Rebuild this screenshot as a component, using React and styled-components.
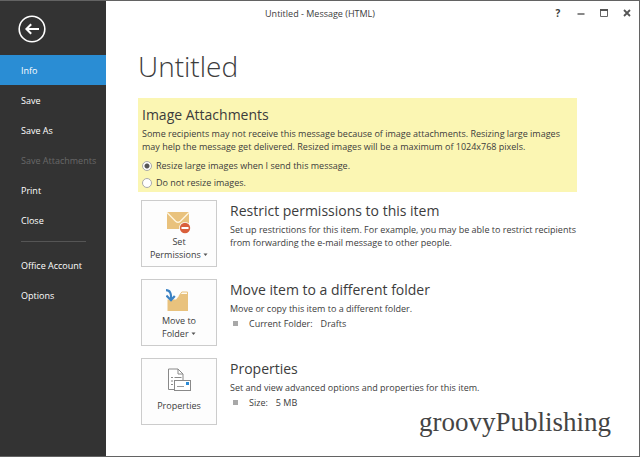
import React, { useState } from "react"
import styled, { createGlobalStyle } from "styled-components"

const GlobalStyle = createGlobalStyle`
  * {
    box-sizing: border-box;
  }

  body {
    margin: 0;
    background: #fff;
    color: #3c3c3c;
    font-family: "Open Sans", "Noto Sans", sans-serif;
    font-size: 9px;
    line-height: 13px;
  }

  button {
    font: inherit;
    color: inherit;
    padding: 0;
    border: 0;
    background: none;
    cursor: pointer;
  }

  h1, h2, p, ul, dl, dd, fieldset {
    margin: 0;
    padding: 0;
  }
`

const mainLinks = [
  { label: "Info", active: true },
  { label: "Save" },
  { label: "Save As" },
  { label: "Save Attachments", disabled: true },
  { label: "Print" },
  { label: "Close" },
]

const accountLinks = [{ label: "Office Account" }, { label: "Options" }]

export default function App() {
  return (
    <Window>
      <GlobalStyle />
      <Sidebar>
        <BackButton aria-label="Back">
          <BackIcon />
        </BackButton>
        <NavItems links={mainLinks} />
        <Divider />
        <NavItems links={accountLinks} />
      </Sidebar>
      <Main>
        <TitleBar>
          <WindowTitle>Untitled - Message (HTML)</WindowTitle>
          <WindowControls />
        </TitleBar>
        <Content>
          <PageTitle>Untitled</PageTitle>
          <AttachmentNotice />
          <Rows>
            <Row>
              <Tile>
                <PermissionsIcon />
                <TileLabel>
                  Set
                  <br />
                  Permissions <Caret />
                </TileLabel>
              </Tile>
              <RowText>
                <SectionTitle>Restrict permissions to this item</SectionTitle>
                <Description>
                  Set up restrictions for this item. For example, you may be able to restrict recipients
                  <br />
                  from forwarding the e-mail message to other people.
                </Description>
              </RowText>
            </Row>
            <Row>
              <Tile>
                <FolderIcon />
                <TileLabel>
                  Move to
                  <br />
                  Folder <Caret />
                </TileLabel>
              </Tile>
              <RowText>
                <SectionTitle>Move item to a different folder</SectionTitle>
                <Description>Move or copy this item to a different folder.</Description>
                <Detail>
                  <dt>Current Folder:</dt>
                  <dd>Drafts</dd>
                </Detail>
              </RowText>
            </Row>
            <Row>
              <Tile>
                <PropertiesIcon />
                <TileLabel>Properties</TileLabel>
              </Tile>
              <RowText>
                <SectionTitle>Properties</SectionTitle>
                <Description>Set and view advanced options and properties for this item.</Description>
                <Detail>
                  <dt>Size:</dt>
                  <dd>5 MB</dd>
                </Detail>
              </RowText>
            </Row>
          </Rows>
        </Content>
      </Main>
      <Watermark>groovyPublishing</Watermark>
    </Window>
  )
}

function NavItems({ links }) {
  return (
    <NavList>
      {links.map(({ label, active, disabled }) => (
        <li key={label}>
          <NavButton $active={active} disabled={disabled}>
            {label}
          </NavButton>
        </li>
      ))}
    </NavList>
  )
}

function AttachmentNotice() {
  const [resize, setResize] = useState("yes")
  return (
    <Notice>
      <SectionTitle>Image Attachments</SectionTitle>
      <Description>
        Some recipients may not receive this message because of image attachments. Resizing large images
        <br />
        may help the message get delivered. Resized images will be a maximum of 1024x768 pixels.
      </Description>
      <Choices>
        <Choice>
          <Radio name="resize" checked={resize === "yes"} onChange={() => setResize("yes")} />
          Resize large images when I send this message.
        </Choice>
        <Choice>
          <Radio name="resize" checked={resize === "no"} onChange={() => setResize("no")} />
          Do not resize images.
        </Choice>
      </Choices>
    </Notice>
  )
}

const WindowControls = () => (
  <Controls>
    <ControlButton aria-label="Help">?</ControlButton>
    <ControlButton aria-label="Minimize">
      <svg width="8" height="8" viewBox="0 0 8 8">
        <path d="M0.5 5h7" stroke="#555" strokeWidth="1.4" />
      </svg>
    </ControlButton>
    <ControlButton aria-label="Maximize">
      <svg width="8" height="8" viewBox="0 0 8 8">
        <path d="M0.5 1v6.5h7V1" fill="none" stroke="#666" />
        <path d="M0 1h8" stroke="#555" strokeWidth="2" />
      </svg>
    </ControlButton>
    <ControlButton aria-label="Close window">
      <svg width="8" height="8" viewBox="0 0 8 8">
        <path d="M1 1l6 6M7 1L1 7" stroke="#555" strokeWidth="1.8" />
      </svg>
    </ControlButton>
  </Controls>
)

const BackIcon = () => (
  <svg width="28" height="28" viewBox="0 0 28 28" fill="none" stroke="#fff">
    <circle cx="14" cy="14" r="12.8" strokeWidth="1.6" />
    <path d="M21 14H9M13.2 9.2L8.4 14l4.8 4.8" strokeWidth="2" />
  </svg>
)

const Caret = () => (
  <svg width="5" height="8" viewBox="0 0 5 8">
    <path d="M0.5 3.5h4L2.5 6z" fill="#555" />
  </svg>
)

const PermissionsIcon = () => (
  <svg width="26" height="24" viewBox="0 0 26 24">
    <rect x="1" y="2" width="22" height="17" fill="#e9c27d" />
    <path d="M1 2.5l8.6 8.8q2.4 2 4.8 0L23 2.5" fill="none" stroke="#fff6df" strokeWidth="1.3" />
    <circle cx="19" cy="18" r="6" fill="#fdfdfd" />
    <circle cx="19" cy="18" r="5.2" fill="#d95f3b" />
    <rect x="15.5" y="17" width="7" height="2" fill="#fff" />
  </svg>
)

const FolderIcon = () => (
  <svg width="26" height="24" viewBox="0 0 26 24">
    <path d="M13 7l2.8-4h5.7v4" fill="#fffaf0" stroke="#e9c27d" />
    <path d="M1.5 22V10.5H10L14.5 5H22v17z" fill="#e9c27d" />
    <path d="M0 0.8c4.2 0 5.8 3 5 10" fill="none" stroke="#fdfdfd" strokeWidth="4" />
    <path d="M0 1.2c3.8 0 5.6 3 5 9.4M0.4 6.6l4.6 4.6L8.8 7" fill="none" stroke="#3b82c4" strokeWidth="2.2" />
  </svg>
)

const PropertiesIcon = () => (
  <svg width="26" height="24" viewBox="0 0 26 24">
    <path d="M2.5 1h9.5l5 5v15.5H2.5z" fill="#fff" stroke="#898989" />
    <path d="M12 1v5h5" fill="none" stroke="#898989" />
    <path d="M5 9.5h2M8.5 9.5h7M5 13h2M5 16.5h2" stroke="#898989" />
    <rect x="8.5" y="12.5" width="16" height="10" fill="#fff" stroke="#898989" />
    <rect x="20" y="14" width="3" height="3" fill="#2b8ad6" />
    <path d="M11 18.5h7" stroke="#999" />
  </svg>
)

const Window = styled.div`
  position: relative;
  display: flex;
  min-height: 100vh;
  border: 1px solid #636363;
  border-left: 0;
`

const Sidebar = styled.nav`
  flex: 0 0 106px;
  padding-top: 14px;
  background: #333;
  color: #fff;
`

const BackButton = styled.button`
  display: block;
  height: 28px;
  margin: 0 0 12px 18px;

  svg {
    display: block;
  }
`

const NavList = styled.ul`
  list-style: none;
`

const NavButton = styled.button`
  display: block;
  width: 100%;
  height: 30px;
  padding-left: 21px;
  text-align: left;
  background: ${props => (props.$active ? "#2a8dd4" : "transparent")};

  &:disabled {
    color: #686868;
    cursor: default;
  }
`

const Divider = styled.hr`
  height: 1px;
  margin: 6px 20px 8px 21px;
  border: 0;
  background: #555;
`

const Main = styled.main`
  flex: 1;
  min-width: 0;
`

const TitleBar = styled.header`
  display: grid;
  grid-template-columns: 1fr auto;
  align-items: center;
  height: 24px;
  padding-right: 4px;
`

const WindowTitle = styled.div`
  padding-right: 16px;
  text-align: center;
`

const Controls = styled.div`
  display: flex;
  gap: 7px;
`

const ControlButton = styled.button`
  display: grid;
  place-items: center;
  width: 16px;
  height: 16px;
  font-size: 10px;
  font-weight: 700;
`

const Content = styled.div`
  padding: 20px 62px 0 32px;
`

const PageTitle = styled.h1`
  margin-bottom: 11px;
  font-size: 28px;
  font-weight: 300;
  line-height: 42px;
`

const SectionTitle = styled.h2`
  margin-bottom: 2px;
  font-size: 14px;
  font-weight: 400;
  line-height: 20px;
`

const Description = styled.p`
  white-space: nowrap;
`

const Notice = styled.section`
  padding: 7px 4px 1px;
  background: #fbf6b3;
`

const Choices = styled.fieldset`
  min-width: 0;
  margin-top: 4px;
  border: 0;
`

const Choice = styled.label`
  display: flex;
  align-items: center;
  gap: 4px;
  height: 17px;
`

const Radio = styled.input.attrs({ type: "radio" })`
  appearance: none;
  width: 10px;
  height: 10px;
  margin: 0;
  border: 1px solid #aaa;
  border-radius: 50%;
  background: #fff;

  &:checked {
    background: radial-gradient(circle, #555 0 2px, #fff 3px);
  }
`

const Rows = styled.div`
  display: flex;
  flex-direction: column;
  gap: 12px;
  padding: 8px 0 0 3px;
`

const Row = styled.section`
  display: flex;
  gap: 13px;
`

const RowText = styled.div`
  padding-top: 1px;
`

const Tile = styled.button`
  && {
    display: flex;
    flex: 0 0 76px;
    flex-direction: column;
    align-items: center;
    height: 67px;
    padding: 9px 0 5px;
    border: 1px solid #ccc;
    background: #fdfdfd;
  }
`

const TileLabel = styled.span`
  display: block;
  margin: auto 0;
`

const Detail = styled.dl`
  display: flex;
  align-items: center;
  gap: 8px;
  padding-left: 3px;
  margin-top: 2px;

  &::before {
    content: "";
    width: 5px;
    height: 5px;
    margin-right: 3px;
    background: #a8a8a8;
  }
`

/* sits over the bottom corner of the window */
const Watermark = styled.div`
  position: absolute;
  right: 28px;
  bottom: 16px;
  font-family: "Liberation Serif", serif;
  font-size: 27px;
  line-height: 36px;
  color: #444;
`
